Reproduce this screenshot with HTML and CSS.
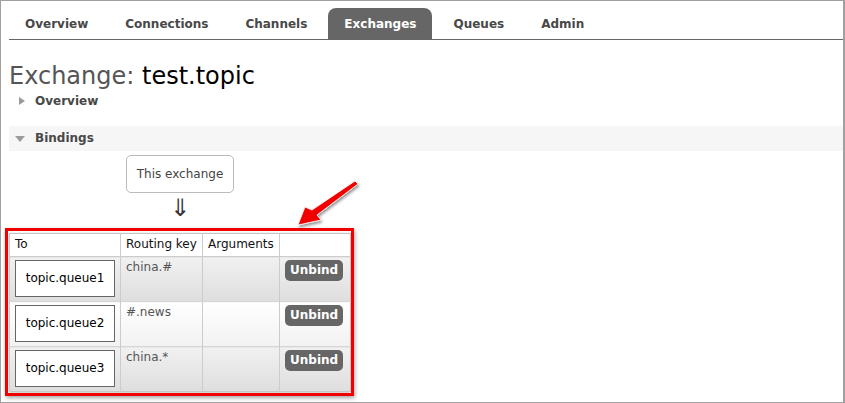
FILE: index.html
```html
<!DOCTYPE html>
<html>
<head>
<meta charset="utf-8">
<link rel="stylesheet" href="styles.css">
</head>
<body>
<div class="frame">
  <div class="content">
    <ul class="tabs">
      <li>Overview</li>
      <li>Connections</li>
      <li>Channels</li>
      <li class="active">Exchanges</li>
      <li>Queues</li>
      <li>Admin</li>
    </ul>
    <h1><span class="label">Exchange:</span> test.topic</h1>
    <div class="section">
      <h2><span class="tri-box"><span class="tri-right"></span></span>Overview</h2>
    </div>
    <div class="section">
      <h2 class="open"><span class="tri-box"><span class="tri-down"></span></span>Bindings</h2>
      <div class="bindings-wrapper">
        <span class="object">This exchange</span>
        <p class="arrow">⇓</p>
        <table class="list">
          <thead>
            <tr>
              <th class="c-to">To</th>
              <th class="c-key">Routing key</th>
              <th class="c-args">Arguments</th>
              <th class="c-act"></th>
            </tr>
          </thead>
          <tbody>
            <tr class="alt1">
              <td><span class="queue">topic.queue1</span></td>
              <td class="key">china.#</td>
              <td></td>
              <td><span class="btn">Unbind</span></td>
            </tr>
            <tr class="alt2">
              <td><span class="queue">topic.queue2</span></td>
              <td class="key">#.news</td>
              <td></td>
              <td><span class="btn">Unbind</span></td>
            </tr>
            <tr class="alt1">
              <td><span class="queue">topic.queue3</span></td>
              <td class="key">china.*</td>
              <td></td>
              <td><span class="btn">Unbind</span></td>
            </tr>
          </tbody>
        </table>
      </div>
    </div>
  </div>
  <div class="annot-box"></div>
  <svg class="annot-arrow" width="75" height="55" viewBox="290 176 75 55">
    <defs>
      <filter id="sh" x="-20%" y="-20%" width="150%" height="150%">
        <feDropShadow dx="1" dy="2" stdDeviation="1.5" flood-color="#000" flood-opacity="0.45"/>
      </filter>
    </defs>
    <polygon filter="url(#sh)" fill="#f20000" stroke="#fff" stroke-width="0.8" points="298,225 305,207 312,210 355,181 358,184 317,215 321,220"/>
  </svg>
</div>
</body>
</html>
```

FILE: styles.css
```css
* { box-sizing: border-box; }
html, body { margin: 0; padding: 0; background: #fff; }
body { font-family: "DejaVu Sans", Verdana, sans-serif; font-size: 12px; color: #484848; }

.frame {
  position: relative;
  width: 845px;
  height: 403px;
  border: 1px solid #a0a0a0;
  border-right-width: 2px;
  overflow: hidden;
}
.content { padding-left: 8px; }

.tabs {
  list-style: none;
  margin: 0;
  padding: 7px 0 0 0;
  display: flex;
  border-bottom: 1px solid #666;
}
.tabs li {
  padding: 9px 16px 7px;
  line-height: 15px;
  font-weight: bold;
  color: #484848;
  margin-right: 5px;
  border-radius: 8px 8px 0 0;
}
.tabs li.active { background: #666; color: #fff; }

h1 {
  margin: 22px 0 0 0;
  font-size: 24px;
  line-height: 28px;
  font-weight: normal;
  color: #000;
}
h1 .label { color: #555; }

.section h2 {
  margin: 1px 0 0 0;
  font-size: 12px;
  line-height: 20px;
  font-weight: bold;
  color: #484848;
  display: flex;
  align-items: center;
}
.section h2.open {
  margin-top: 15px;
  line-height: 25px;
  background: #f6f6f6;
}
.tri-box {
  width: 26px;
  display: flex;
  justify-content: flex-end;
  padding-right: 10px;
}
.tri-right {
  width: 0; height: 0;
  border-top: 4.5px solid transparent;
  border-bottom: 4.5px solid transparent;
  border-left: 6px solid #9a9a9a;
}
.tri-down {
  width: 0; height: 0;
  border-left: 5px solid transparent;
  border-right: 5px solid transparent;
  border-top: 6px solid #9a9a9a;
}

.bindings-wrapper {
  display: inline-flex;
  flex-direction: column;
  align-items: center;
  margin-top: 4px;
}
.object {
  display: inline-block;
  border: 1px solid #bbb;
  border-radius: 5px;
  padding: 10px 10px;
  line-height: 16px;
  color: #444;
}
.arrow {
  margin: 0;
  height: 40px;
  font-size: 24px;
  line-height: 30px;
  color: #333;
}

.list {
  border-collapse: collapse;
  border: 1px solid #c4c4c4;
  box-shadow: 0 1px 3px rgba(0,0,0,0.25);
  text-align: left;
}
.list th {
  font-weight: normal;
  color: #111;
  padding: 3px 5px 4px;
  line-height: 15px;
  border-left: 1px solid #ccc;
  border-bottom: 1px solid #ccc;
  background: #fff;
}
.c-to { width: 111px; }
.c-key { width: 82px; }
.c-args { width: 77px; }
.c-act { width: 71px; }
.list td {
  vertical-align: top;
  padding: 3px 5px 4px;
  line-height: 15px;
  border-left: 1px solid #ccc;
  border-top: 1px solid #d6d6d6;
}
.list tr.alt1 td { background: linear-gradient(#f1f1f1, #dedede); }
.list tr.alt2 td { background: linear-gradient(#ffffff, #f2f2f2); }
.list td.key { color: #555; }

.queue {
  display: block;
  width: 100px;
  border: 1px solid #666;
  background: #fff;
  padding: 10px 0;
  text-align: center;
  color: #000;
}
.btn {
  display: inline-block;
  background: #666;
  color: #fff;
  font-weight: bold;
  padding: 3px 5px;
  border-radius: 5px;
  line-height: 15px;
}

.annot-box {
  position: absolute;
  left: 4px;
  top: 227px;
  width: 349px;
  height: 168px;
  border: 3px solid #f20000;
  box-shadow: 1px 2px 4px rgba(0,0,0,0.35);
}
.annot-arrow {
  position: absolute;
  left: 289px;
  top: 175px;
}
```
